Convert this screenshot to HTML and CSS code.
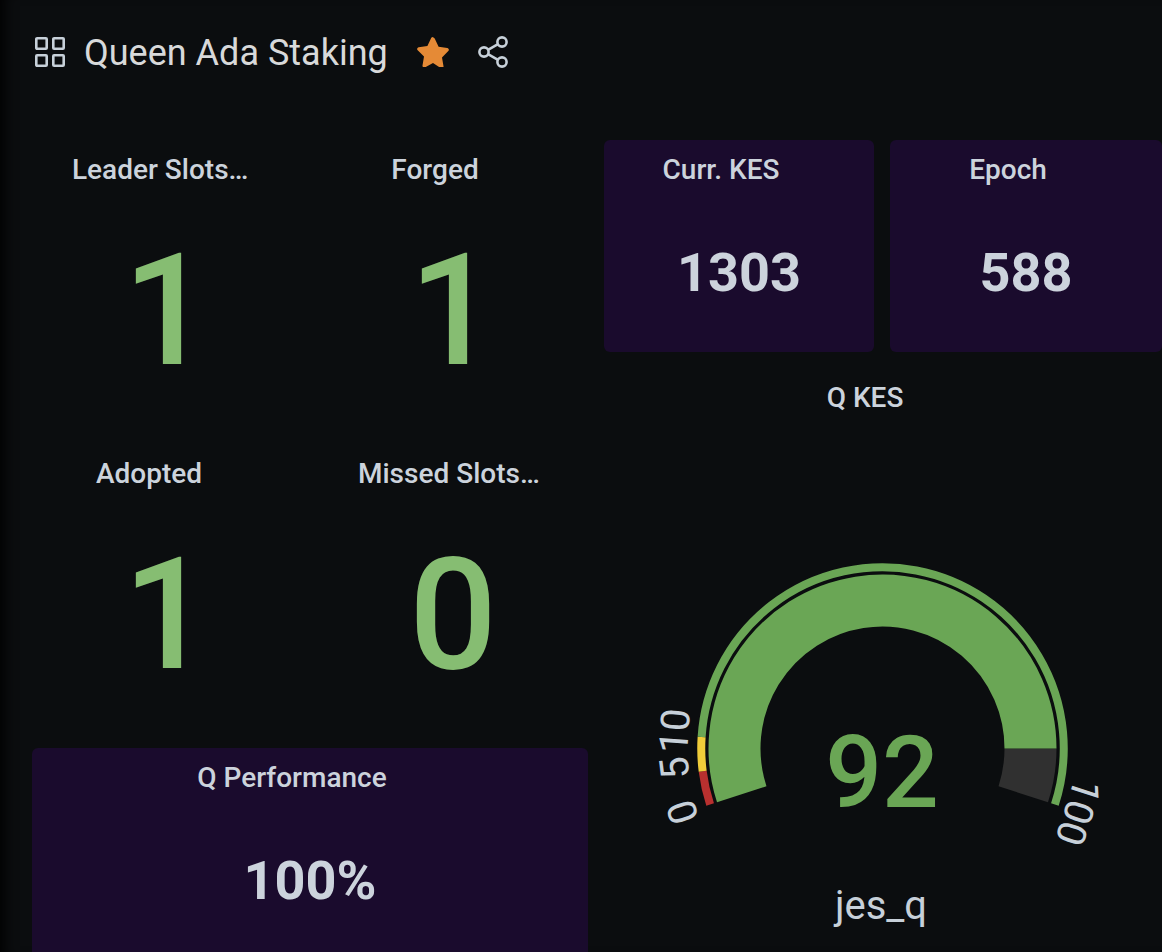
FILE: index.html
```html
<!DOCTYPE html>
<html lang="en">
<head>
    <meta charset="UTF-8">
    <meta name="viewport" content="width=device-width, initial-scale=1.0">
    <title>Queen Ada Staking</title>
    <link rel="stylesheet" href="styles.css">
</head>
<body>
    <div class="page">
        <header class="topbar">
            <svg class="icon-apps" width="32" height="32" viewBox="0 0 32 32" fill="none" stroke="#c7d0d9" stroke-width="2.6" stroke-linejoin="round">
                <rect x="2.3" y="2.3" width="10.4" height="10.4" rx="0.8"/>
                <rect x="19.3" y="2.3" width="10.4" height="10.4" rx="0.8"/>
                <rect x="2.3" y="19.3" width="10.4" height="10.4" rx="0.8"/>
                <rect x="19.3" y="19.3" width="10.4" height="10.4" rx="0.8"/>
            </svg>
            <h1>Queen Ada Staking</h1>
            <svg class="icon-star" width="32" height="30" viewBox="0 0 32 30">
                <path d="M16 0.5c.8 0 1.4.5 1.7 1.1l3.9 8.1 8.7 1.3c1.5.2 2.1 2.1 1 3.1l-6.3 6.3 1.5 8.8c.3 1.5-1.3 2.7-2.7 1.9L16 26.1l-7.8 4.2c-1.4.7-3-.4-2.7-1.9L7 19.6.7 13.3c-1.1-1-.5-2.9 1-3.1l8.7-1.3 3.9-8.1c.3-.6.9-.8 1.7-.8z" fill="#e58a36"/>
            </svg>
            <svg class="icon-share" width="32" height="32" viewBox="0 0 32 32" fill="none" stroke="#c7d0d9" stroke-width="2.6">
                <circle cx="25" cy="6" r="4.6"/>
                <circle cx="7" cy="16" r="4.6"/>
                <circle cx="25" cy="26" r="4.6"/>
                <path d="M11 13.8 21 8.2M11 18.2l10 5.6"/>
            </svg>
        </header>

        <main class="dashboard">
            <section class="col-left">
                <div class="panel">
                    <div class="panel-title clipped"><span>Leader Slots…</span></div>
                    <div class="panel-value big">1</div>
                </div>
                <div class="panel">
                    <div class="panel-title"><span>Forged</span></div>
                    <div class="panel-value big">1</div>
                </div>
                <div class="panel">
                    <div class="panel-title"><span>Adopted</span></div>
                    <div class="panel-value big">1</div>
                </div>
                <div class="panel">
                    <div class="panel-title clipped"><span>Missed Slots…</span></div>
                    <div class="panel-value big">0</div>
                </div>
                <div class="panel card wide short">
                    <div class="panel-title"><span>Q Performance</span></div>
                    <div class="panel-value">100%</div>
                </div>
            </section>

            <section class="col-right">
                <div class="panel card">
                    <div class="panel-title"><span>Curr. KES</span></div>
                    <div class="panel-value">1303</div>
                </div>
                <div class="panel card">
                    <div class="panel-title"><span>Epoch</span></div>
                    <div class="panel-value">588</div>
                </div>
                <div class="panel wide gauge-panel">
                    <div class="panel-title"><span>Q KES</span></div>
                    <svg class="gauge" width="558" height="524" viewBox="0 0 558 524" fill="none">
                        <!-- thresholds ring -->
                        <path d="M106.12 376.51A181.25 181.25 0 0 1 98.68 343.22" stroke="#b8302f" stroke-width="8"/>
                        <path d="M98.68 343.22A181.25 181.25 0 0 1 97.61 309.12" stroke="#f0cd3a" stroke-width="8"/>
                        <path d="M97.61 309.12A181.25 181.25 0 1 1 450.88 376.51" stroke="#6aa655" stroke-width="8"/>
                        <!-- value arc -->
                        <path d="M426.5 320.5A148 148 0 0 1 419.26 366.24" stroke="#303030" stroke-width="52"/>
                        <path d="M137.74 366.24A148 148 0 1 1 426.5 320.5" stroke="#6aa655" stroke-width="52"/>

                        <text class="tick" transform="translate(79 384) rotate(-108)">0</text>
                        <text class="tick" transform="translate(71 340) rotate(-97)">5</text>
                        <text class="tick" transform="translate(71 303) rotate(-86)">10</text>
                        <text class="tick" transform="translate(474 384) rotate(108)">100</text>

                        <text class="gauge-value" x="278" y="379">92</text>
                        <text class="gauge-name" x="277" y="491">jes_q</text>
                    </svg>
                </div>
            </section>
        </main>
    </div>
</body>
</html>
```

FILE: styles.css
```css
body {
    margin: 0;
    background-color: #0b0c0e;
    font-family: Roboto, "Liberation Sans", sans-serif;
}
.page {
    width: 1162px;
    height: 952px;
    overflow: hidden;
    background-color: #0b0d0f;
    box-shadow: inset 14px 0 14px -10px #000;
}
.topbar {
    display: flex;
    align-items: center;
    height: 104px;
    padding-left: 34px;
}
.topbar h1 {
    margin: 2px 29px 0 18px;
    font-size: 36px;
    font-weight: 400;
    color: #d8d9da;
}
.icon-star {
    margin-right: 28px;
}
.dashboard {
    display: flex;
    gap: 16px;
    padding: 36px 0 0 32px;
}
.col-left {
    display: grid;
    grid-template-columns: 270px 270px;
    grid-auto-rows: 288px;
    gap: 16px;
    width: 556px;
}
.col-right {
    display: grid;
    grid-template-columns: 270px 272px;
    grid-template-rows: 212px 584px;
    gap: 16px;
    width: 558px;
}
.panel {
    display: flex;
    flex-direction: column;
}
.wide {
    grid-column: span 2;
}
.short {
    height: 212px;
}
.card {
    background-color: #1a0b2d;
    border-radius: 6px;
}
.panel-title {
    display: flex;
    justify-content: center;
    flex: 0 0 60px;
    box-sizing: border-box;
    padding: 14px 36px 0 0;
    font-size: 28px;
    font-weight: 500;
    line-height: 32px;
    color: #ccd3dc;
    white-space: nowrap;
}
.panel-title.clipped {
    justify-content: flex-start;
    padding: 14px 0 0 40px;
}
.panel-value {
    flex: 1;
    display: flex;
    align-items: center;
    justify-content: center;
    padding-bottom: 8px;
    font-size: 54px;
    font-weight: 700;
    color: #ccd3dc;
}
.panel-value.big {
    font-size: 155px;
    font-weight: 500;
    color: #86bd72;
    padding-bottom: 6px;
}
.gauge {
    display: block;
}
.tick {
    font-size: 40px;
    fill: #c7d0d9;
    text-anchor: middle;
    dominant-baseline: central;
}
.gauge-value {
    font-size: 100px;
    font-weight: 500;
    fill: #6aa655;
    text-anchor: middle;
}
.gauge-name {
    font-size: 40px;
    fill: #c7d0d9;
    text-anchor: middle;
}
```
